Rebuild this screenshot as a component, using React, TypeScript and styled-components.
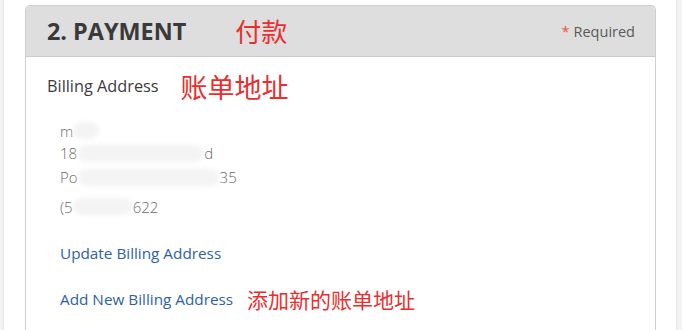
import React from "react";
import styled, { createGlobalStyle } from "styled-components";

const Global = createGlobalStyle`
  html, body { margin: 0; padding: 0; background: #ffffff; }
  body { font-family: "Open Sans", Lato, sans-serif; }
`;

const Page = styled.div`
  display: flex;
  width: 682px;
  height: 330px;
  overflow: hidden;
  background: #ffffff;
`;

const Gutter = styled.div<{ $w: number; $line?: boolean }>`
  flex: 0 0 ${(p) => p.$w}px;
  background: #f3f3f3;
  border-${(p) => (p.$line ? "right" : "left")}: 1px solid #e4e4e4;
`;

const Main = styled.div`
  flex: 1;
  padding: 5px 20px 0 21px;
`;

const Card = styled.section`
  border: 1px solid #cfcfcf;
  border-bottom: none;
  border-radius: 5px 5px 0 0;
  height: 340px;
  overflow: hidden;
`;

const Header = styled.header`
  display: flex;
  align-items: center;
  height: 50px;
  padding: 0 20px 0 21px;
  background: #dedede;
  border-bottom: 1px solid #cacaca;
`;

const Title = styled.h2`
  margin: 0;
  font-size: 23.4px;
  font-weight: 700;
  color: #3a3a3a;
`;

const Note = styled.span<{ $size: number; $gap: number }>`
  font-family: "Noto Sans CJK SC", sans-serif;
  font-size: ${(p) => p.$size}px;
  color: #ea2e2e;
  margin-left: ${(p) => p.$gap}px;
  line-height: 1;
`;

const Required = styled.span`
  margin-left: auto;
  font-size: 14.5px;
  color: #5a5a5a;
`;

const Star = styled.span`
  color: #e4583f;
  margin-right: 4px;
`;

const Body = styled.div`
  padding: 13px 21px 0 21px;
`;

const LabelRow = styled.div`
  display: flex;
  align-items: center;
  height: 32px;
`;

const Label = styled.span`
  font-size: 16.3px;
  color: #3c3c3c;
`;

const Address = styled.div`
  padding: 18px 0 0 13px;
  font-size: 15px;
  font-weight: 300;
  color: #6a6a6a;
`;

const Line = styled.div<{ $h?: number; $mt?: number }>`
  display: flex;
  align-items: center;
  height: ${(p) => p.$h ?? 23}px;
  margin-top: ${(p) => p.$mt ?? 0}px;
`;

const Smudge = styled.span<{ $w: number }>`
  display: inline-block;
  width: ${(p) => p.$w}px;
  height: 17px;
  border-radius: 9px;
  background: #f4f4f4;
  filter: blur(2px);
`;

const Links = styled.div`
  padding: 23px 0 0 13px;
  display: flex;
  flex-direction: column;
  gap: 22px;
`;

const LinkRow = styled.div`
  display: flex;
  align-items: center;
  height: 24px;
`;

const Link = styled.a`
  font-size: 15.3px;
  color: #2f5fa6;
  text-decoration: none;
  cursor: pointer;
`;

export default function App() {
  return (
    <>
      <Global />
      <Page>
        <Gutter $w={3} $line />
        <Main>
          <Card>
            <Header>
              <Title>2. PAYMENT</Title>
              <Note $size={26} $gap={49}>付款</Note>
              <Required>
                <Star>*</Star>Required
              </Required>
            </Header>
            <Body>
              <LabelRow>
                <Label>Billing Address</Label>
                <Note $size={27} $gap={22}>账单地址</Note>
              </LabelRow>
              <Address>
                <Line $h={21}>
                  m<Smudge $w={26} />
                </Line>
                <Line $h={24}>
                  18<Smudge $w={127} />d
                </Line>
                <Line $h={24}>
                  Po<Smudge $w={142} />35
                </Line>
                <Line $mt={6}>
                  (5<Smudge $w={60} />622
                </Line>
              </Address>
              <Links>
                <LinkRow>
                  <Link>Update Billing Address</Link>
                </LinkRow>
                <LinkRow>
                  <Link>Add New Billing Address</Link>
                  <Note $size={21} $gap={14}>添加新的账单地址</Note>
                </LinkRow>
              </Links>
            </Body>
          </Card>
        </Main>
        <Gutter $w={5} />
      </Page>
    </>
  );
}
